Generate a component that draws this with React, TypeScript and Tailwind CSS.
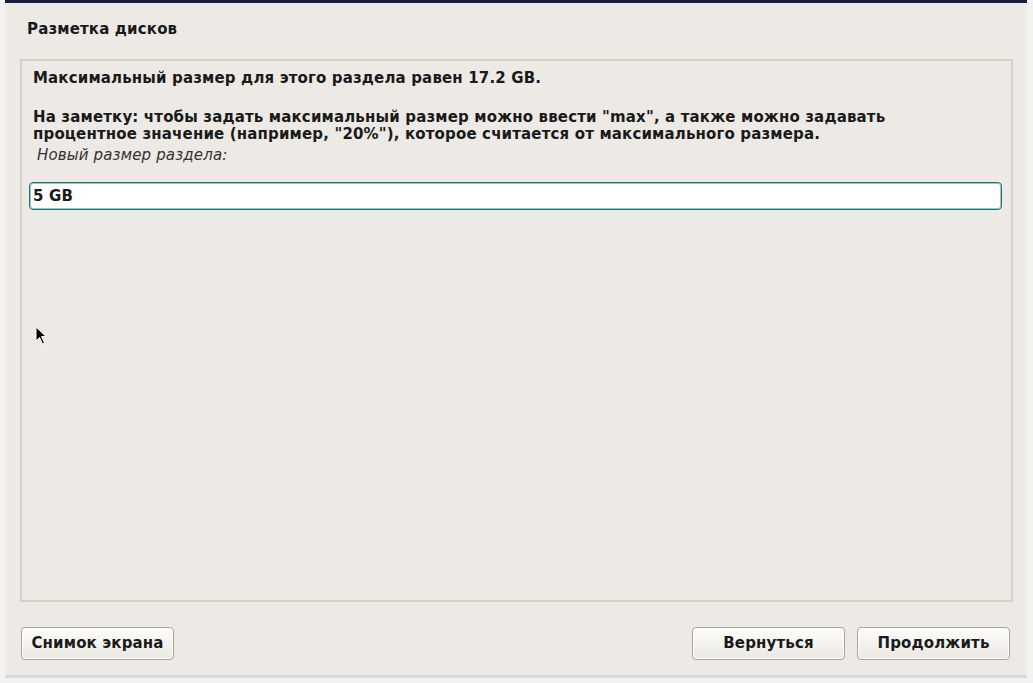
import React from "react"

const Button = ({ label }: { label: string }) => (
  <button className="h-[33px] w-[153px] rounded-[4px] border border-[#a8a39c] bg-gradient-to-b from-[#fdfdfc] to-[#ebe8e3] text-[15px] font-bold tracking-[0.15px] text-[#1a1a1a] shadow-[inset_0_0_0_1px_#ffffff]">
    {label}
  </button>
)

export default function App() {
  return (
    <div
      className="flex h-[683px] w-[1033px] bg-[#f2f2f2] text-[#1a1a1a]"
      style={{ fontFamily: '"DejaVu Sans", "Noto Sans", sans-serif' }}>
      <div className="ml-[5px] flex h-[678px] w-[1022px] flex-col border-b-[3px] border-[#d9d9d9] bg-[#edeae6]">
        <div className="h-[3px] bg-[#1c1c3c]" />
        <div className="px-[22px] pt-[18px] text-[15px] font-bold leading-[17px] tracking-[0.15px]">
          Разметка дисков
        </div>
        <div className="relative mr-[14px] ml-[15px] mt-[21px] flex h-[543px] flex-col border-2 border-[#d6d0c8] px-[11px] pt-[9px] text-[15px] leading-[17px] tracking-[0.15px]">
          <p className="font-bold">
            Максимальный размер для этого раздела равен 17.2 GB.
          </p>
          <p className="mt-[22px] font-bold">
            На заметку: чтобы задать максимальный размер можно ввести "max", а также можно задавать
            <br />
            процентное значение (например, "20%"), которое считается от максимального размера.
          </p>
          <p className="mt-[4px] pl-[4px] italic text-[#333]">
            Новый размер раздела:
          </p>
          <div className="mr-[-2px] ml-[-4px] mt-[18px] flex h-[28px] items-center rounded-[4px] border border-[#2f6b68] bg-white px-[3px] shadow-[inset_0_0_0_1px_#8fd0cc]">
            <span className="font-bold">5 GB</span>
          </div>
          <svg
            className="absolute left-[13px] top-[265px]"
            width="13"
            height="20"
            viewBox="0 0 13 20">
            <path d="M1 1 L1 15 L4.5 11.5 L7.5 18 L9.5 17 L6.5 10.5 L11 10.5 Z" fill="#000" stroke="#fff" strokeWidth="1" />
          </svg>
        </div>
        <div className="mt-[25px] flex items-center pr-[17px] pl-[16px]">
          <Button label="Снимок экрана" />
          <div className="flex-1" />
          <Button label="Вернуться" />
          <div className="w-[12px]" />
          <Button label="Продолжить" />
        </div>
      </div>
    </div>
  )
}
